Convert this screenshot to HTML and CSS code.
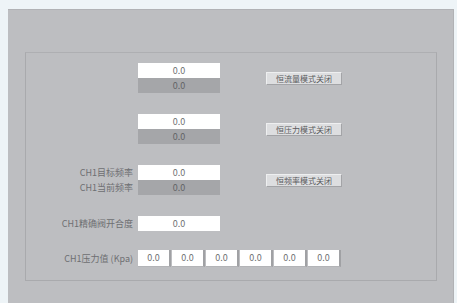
FILE: index.html
```html
<html>
<head>
<meta http-equiv="Content-Type" content="text/html; charset=UTF-8">
<link rel="stylesheet" href="styles.css">
</head>
<body>

<div class="panel">
    <div class="group-box">

        <div class="ctrl-group">
            <div class="ctrl-label"></div>
            <div class="field field-set">0.0</div>
            <div class="mode-button">恒流量模式关闭</div>
            <div class="ctrl-label"></div>
            <div class="field field-read">0.0</div>
        </div>

        <div class="ctrl-group">
            <div class="ctrl-label"></div>
            <div class="field field-set">0.0</div>
            <div class="mode-button">恒压力模式关闭</div>
            <div class="ctrl-label"></div>
            <div class="field field-read">0.0</div>
        </div>

        <div class="ctrl-group">
            <div class="ctrl-label">CH1目标频率</div>
            <div class="field field-set">0.0</div>
            <div class="mode-button">恒频率模式关闭</div>
            <div class="ctrl-label">CH1当前频率</div>
            <div class="field field-read">0.0</div>
        </div>

        <div class="ctrl-group single">
            <div class="ctrl-label">CH1精确阀开合度</div>
            <div class="field field-set">0.0</div>
        </div>

        <div class="pressure-row">
            <div class="ctrl-label">CH1压力值 (Kpa)</div>
            <div class="pressure-cells">
                <div class="cell">0.0</div>
                <div class="cell">0.0</div>
                <div class="cell">0.0</div>
                <div class="cell">0.0</div>
                <div class="cell">0.0</div>
                <div class="cell">0.0</div>
            </div>
        </div>

    </div>
</div>

</body>
</html>
```

FILE: styles.css
```css
body {
    margin: 0;
    background-color: #eef4f7;
    font-family: "Noto Sans CJK SC", "Noto Sans", sans-serif;
    font-size: 9px;
    color: #6e6f72;
}

.panel {
    margin: 9px 3px 0 8px;
    height: 294px;
    background-color: #bdbec1;
    border-top: 1px solid #b1b2b5;
    border-right: 1px solid #b1b2b5;
    padding-top: 42px;
    box-sizing: border-box;
}

.group-box {
    margin: 0 16px 0 17px;
    height: 229px;
    box-sizing: border-box;
    border: 1px solid #a9aaad;
    border-top-color: #aeafb2;
    padding-top: 10px;
    display: flex;
    flex-direction: column;
}

.ctrl-group {
    display: grid;
    grid-template-columns: 107px 82px auto;
    grid-template-rows: 15px 15px;
    column-gap: 5px;
    margin-bottom: 21px;
}

.ctrl-group.single {
    grid-template-rows: 15px;
    margin-bottom: 19px;
}

.ctrl-label {
    grid-column: 1;
    text-align: right;
    line-height: 15px;
    white-space: nowrap;
}

.field {
    grid-column: 2;
    text-align: center;
    line-height: 15px;
    height: 15px;
}

.field-set {
    background-color: #ffffff;
}

.field-read {
    background-color: #a5a6a9;
    color: #626366;
}

.mode-button {
    grid-column: 3;
    grid-row: 1 / span 2;
    align-self: center;
    justify-self: start;
    margin-left: 41px;
    margin-top: 1px;
    width: 76px;
    height: 13px;
    box-sizing: border-box;
    line-height: 12px;
    text-align: center;
    font-size: 8px;
    color: #5a5b5e;
    background-color: #dddee0;
    border: 1px solid #eeeff0;
    border-right-color: #a3a4a7;
    border-bottom-color: #a3a4a7;
}

.pressure-row {
    display: flex;
    align-items: center;
    column-gap: 5px;
}

.pressure-row .ctrl-label {
    width: 107px;
    line-height: 17px;
}

.pressure-cells {
    display: flex;
    column-gap: 1px;
}

.cell {
    width: 33px;
    height: 17px;
    box-sizing: border-box;
    background-color: #ffffff;
    border-right: 2px solid #a0a1a4;
    border-bottom: 1px solid #b3b4b7;
    text-align: center;
    line-height: 16px;
}
```
